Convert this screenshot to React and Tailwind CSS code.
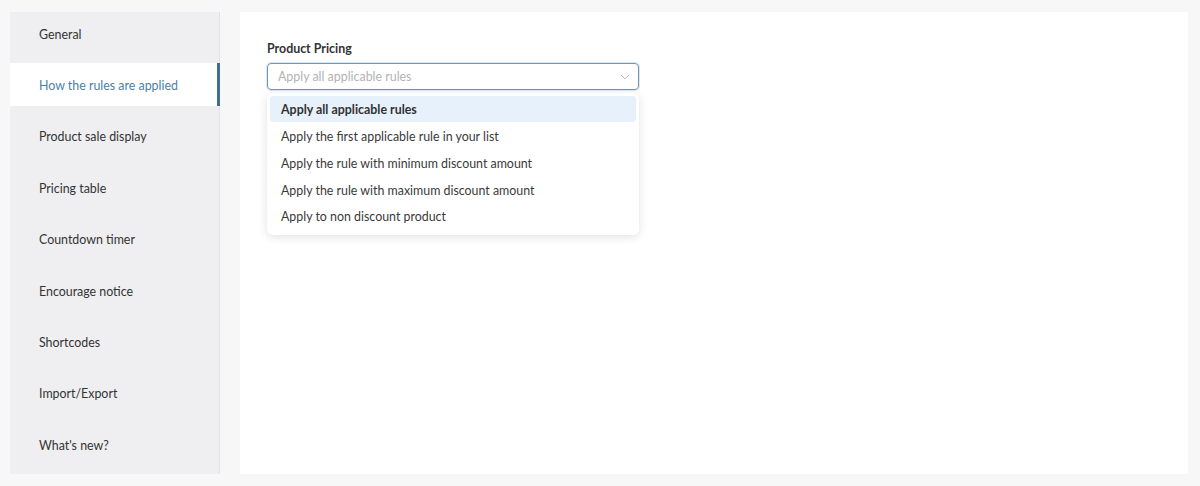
import React, { useState } from "react";

const menu = [
  "General",
  "How the rules are applied",
  "Product sale display",
  "Pricing table",
  "Countdown timer",
  "Encourage notice",
  "Shortcodes",
  "Import/Export",
  "What's new?",
];

const options = [
  "Apply all applicable rules",
  "Apply the first applicable rule in your list",
  "Apply the rule with minimum discount amount",
  "Apply the rule with maximum discount amount",
  "Apply to non discount product",
];

const App = () => {
  const [active] = useState(1);

  return (
    <div
      className="w-[1200px] h-[486px] bg-[#f7f7f7] flex gap-[20px] pl-[10px] pr-[12px] pt-[12px] pb-[12px] text-[#333]"
      style={{ fontFamily: 'Lato, "Open Sans", sans-serif' }}
    >
      {/* sidebar */}
      <div className="w-[210px] bg-[#efeff1] border-r border-[#e2e2e4] flex flex-col gap-[8.4px] pb-[8px]">
        {menu.map((item, i) => (
          <div
            key={item}
            className={
              i === active
                ? "h-[43px] flex items-center pl-[29px] pt-[3px] bg-white text-[#4b7fa6] text-[12.4px] border-r-[3px] border-[#3f6e93] -mr-px"
                : "h-[43px] flex items-center pl-[29px] pt-[3px] text-[12.4px]"
            }
          >
            {item}
          </div>
        ))}
      </div>

      {/* content */}
      <div className="flex-1 bg-white pl-[27px] pt-[30px]">
        <div className="text-[12.4px] font-bold text-[#333] leading-[14px]">Product Pricing</div>
        <div className="w-[372px] mt-[7px]">
          <div className="h-[27px] border border-[#6f97b5] rounded-[4px] flex items-center justify-between pl-[10px] pr-[8px] pt-[1px] shadow-[0_0_0_1px_#dbe8f2]">
            <span className="text-[12.4px] text-[#b3b3b3]">Apply all applicable rules</span>
            <svg width="10" height="10" viewBox="0 0 10 10" fill="none">
              <path d="M1 3l4 4 4-4" stroke="#bdbdbd" strokeWidth="1" />
            </svg>
          </div>
          <div className="mt-[3px] bg-white rounded-[6px] shadow-[0_2px_10px_rgba(0,0,0,0.12)] p-[3px] pb-[5px]">
            {options.map((opt, i) => (
              <div
                key={opt}
                className={
                  i === 0
                    ? "h-[26px] mb-[0.5px] flex items-center pl-[11px] pt-[2px] bg-[#e7f1fb] rounded-[3px] text-[12.4px] font-bold text-[#333]"
                    : "h-[26.8px] flex items-center pl-[11px] pt-[3px] text-[12.4px] text-[#3a3a3a]"
                }
              >
                {opt}
              </div>
            ))}
          </div>
        </div>
      </div>
    </div>
  );
};

export default App;
